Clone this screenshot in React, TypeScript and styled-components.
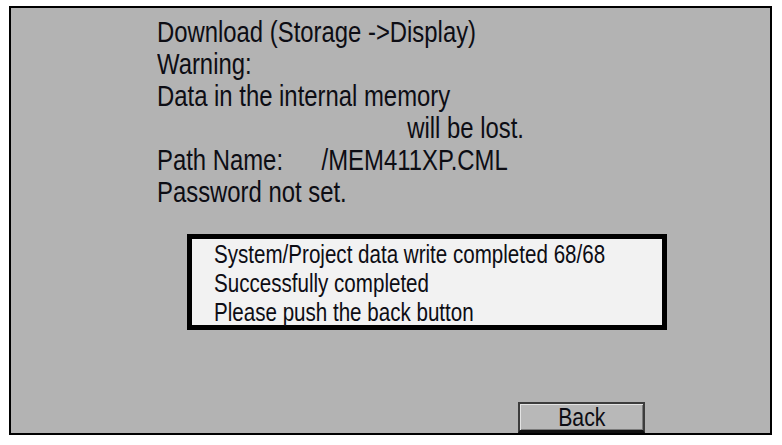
import React from "react";
import styled, { createGlobalStyle } from "styled-components";

const Global = createGlobalStyle`
  html, body { margin: 0; padding: 0; background: #ffffff; }
  body { font-family: "Liberation Sans", Arial, sans-serif; }
`;

const Frame = styled.div`
  box-sizing: border-box;
  margin: 6px 0 0 9px;
  width: 763px;
  height: 429px;
  border: 2px solid #000;
  background: #b3b3b3;
  display: flex;
  flex-direction: column;
  color: #0d0d14;
`;

/* The panel font is a narrow grotesque; Liberation Sans is condensed horizontally */
const Condensed = styled.div<{ $scale?: number }>`
  transform: scaleX(${(p) => p.$scale ?? 0.823});
  transform-origin: 0 0;
`;

const Info = styled.div`
  padding: 8px 0 0 146px;
  font-size: 29px;
  line-height: 32px;
`;

const Line = styled.div<{ $indent?: number }>`
  white-space: pre;
  padding-left: ${(p) => p.$indent ?? 0}px;
`;

const PathRow = styled.div`
  display: flex;
`;

const PathLabel = styled.span`
  width: 200px;
`;

const StatusBox = styled.div`
  box-sizing: border-box;
  margin: 26px 0 0 176px;
  width: 480px;
  height: 96px;
  border: 5px solid #000;
  background: #f2f2f2;
  padding: 1px 0 0 22px;
  font-size: 25px;
  line-height: 29px;
`;

const Footer = styled.div`
  margin-top: auto;
  display: flex;
  padding-left: 507px;
`;

const BackButton = styled.button`
  box-sizing: border-box;
  width: 127px;
  height: 31px;
  background: #b8b8b8;
  border: 2px solid #3c3c3c;
  border-bottom: 3px solid #111;
  box-shadow: inset 1px 1px 0 #e4e4e4, inset -1px -1px 0 #7a7a7a;
  font-family: inherit;
  font-size: 25px;
  line-height: 26px;
  color: #0d0d14;
  padding: 0;
  display: flex;
  justify-content: center;
`;

const ButtonLabel = styled.span`
  display: inline-block;
  transform: scaleX(0.85);
`;

export default function App() {
  return (
    <>
      <Global />
      <Frame>
        <Info>
          <Condensed>
            <Line>Download (Storage -&gt;Display)</Line>
            <Line>Warning:</Line>
            <Line>Data in the internal memory</Line>
            <Line $indent={304}>will be lost.</Line>
            <PathRow>
              <PathLabel>Path Name:</PathLabel>
              <span>/MEM411XP.CML</span>
            </PathRow>
            <Line>Password not set.</Line>
          </Condensed>
        </Info>
        <StatusBox>
          <Condensed>
            <Line>System/Project data write completed 68/68</Line>
            <Line>Successfully completed</Line>
            <Line>Please push the back button</Line>
          </Condensed>
        </StatusBox>
        <Footer>
          <BackButton>
            <ButtonLabel>Back</ButtonLabel>
          </BackButton>
        </Footer>
      </Frame>
    </>
  );
}
